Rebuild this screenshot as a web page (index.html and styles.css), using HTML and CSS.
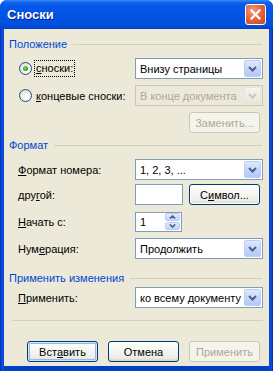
FILE: index.html
```html
<!DOCTYPE html>
<html lang="ru">
<head>
<meta charset="utf-8">
<title>Сноски</title>
<link rel="stylesheet" href="styles.css">
</head>
<body>
<div class="window">
  <!-- ===== заголовок ===== -->
  <div class="titlebar">
    <span class="title">Сноски</span>
    <span class="close">
      <svg width="11" height="11" viewBox="0 0 11 11"><path d="M1.5 1.5 9.5 9.5M9.5 1.5 1.5 9.5" stroke="#fff" stroke-width="2.2" stroke-linecap="square"/></svg>
    </span>
  </div>

  <div class="client">
    <!-- ===== Положение ===== -->
    <div class="caption"><span>Положение</span></div>
    <div class="row first">
      <label class="radio-label"><span class="radio checked"></span><span class="focus"><u>с</u>носки:</span></label>
      <div class="select"><span class="val">Внизу страницы</span><span class="drop"><svg width="9" height="6" viewBox="0 0 9 6"><path d="M1 1 4.5 4.5 8 1" fill="none" stroke="#4d6185" stroke-width="2"/></svg></span></div>
    </div>
    <div class="row">
      <label class="radio-label"><span class="radio"></span><span class="plain"><u>к</u>онцевые сноски:</span></label>
      <div class="select disabled"><span class="val">В конце документа</span><span class="drop"><svg width="9" height="6" viewBox="0 0 9 6"><path d="M1 1 4.5 4.5 8 1" fill="none" stroke="#c9c7ba" stroke-width="2"/></svg></span></div>
    </div>
    <div class="row right">
      <span class="btn disabled">Заменить...</span>
    </div>

    <!-- ===== Формат ===== -->
    <div class="caption fmt"><span>Формат</span></div>
    <div class="row first">
      <span class="lbl"><u>Ф</u>ормат номера:</span>
      <div class="select"><span class="val">1, 2, 3, ...</span><span class="drop"><svg width="9" height="6" viewBox="0 0 9 6"><path d="M1 1 4.5 4.5 8 1" fill="none" stroke="#4d6185" stroke-width="2"/></svg></span></div>
    </div>
    <div class="row tight">
      <span class="lbl">дру<u>г</u>ой:</span>
      <div class="pair">
        <span class="input"></span>
        <span class="btn dark">С<u>и</u>мвол...</span>
      </div>
    </div>
    <div class="row">
      <span class="lbl"><u>Н</u>ачать с:</span>
      <div class="spin">
        <span class="val">1</span>
        <span class="arrows">
          <span class="half"><svg width="7" height="4" viewBox="0 0 7 4"><path d="M.8 3.5 3.5 1 6.2 3.5" fill="none" stroke="#4d6185" stroke-width="1.6"/></svg></span>
          <span class="half"><svg width="7" height="4" viewBox="0 0 7 4"><path d="M.8 .5 3.5 3 6.2 .5" fill="none" stroke="#4d6185" stroke-width="1.6"/></svg></span>
        </span>
      </div>
    </div>
    <div class="row">
      <span class="lbl">Нум<u>е</u>рация:</span>
      <div class="select"><span class="val">Продолжить</span><span class="drop"><svg width="9" height="6" viewBox="0 0 9 6"><path d="M1 1 4.5 4.5 8 1" fill="none" stroke="#4d6185" stroke-width="2"/></svg></span></div>
    </div>

    <!-- ===== Применить изменения ===== -->
    <div class="caption apply"><span>Применить изменения</span></div>
    <div class="row near">
      <span class="lbl"><u>П</u>рименить:</span>
      <div class="select"><span class="val">ко всему документу</span><span class="drop"><svg width="9" height="6" viewBox="0 0 9 6"><path d="M1 1 4.5 4.5 8 1" fill="none" stroke="#4d6185" stroke-width="2"/></svg></span></div>
    </div>

    <div class="sep"></div>

    <!-- ===== кнопки ===== -->
    <div class="buttons">
      <span class="btn default">Вст<u>а</u>вить</span>
      <span class="btn">Отмена</span>
      <span class="btn disabled">Применить</span>
    </div>
  </div>
</div>
</body>
</html>
```

FILE: styles.css
```css
/* ==== общие ==== */
*,*::before,*::after{box-sizing:border-box;margin:0;padding:0}
html,body{width:100%;height:100%;background:#fff}
body{font-family:"Liberation Sans",Arial,sans-serif;font-size:11px;color:#000}
u{text-decoration:underline;text-underline-offset:1px}

/* ==== окно ==== */
.window{
  width:273px;height:371px;
  display:flex;flex-direction:column;
  background:linear-gradient(90deg,#0019a8 0,#0843d0 1px,#0a4fe0 2px,#0a4fe0 3px,#0040c8 4px,#0040c8 269px,#0a4fe0 270px,#0843d0 272px,#0019a8 273px);
  border-radius:7px 7px 0 0;
  overflow:hidden;
}
.titlebar{
  height:29px;flex:none;
  display:flex;align-items:center;justify-content:space-between;
  padding:0 7px 0 7px;
  background:linear-gradient(#3c8cf6 0,#1468ef 2px,#0858e8 5px,#0055e6 14px,#0052e0 22px,#004bd6 27px,#0040c4 29px);
}
.title{
  color:#fff;font-weight:bold;font-size:13px;
  text-shadow:1px 1px 0 #0a1e8c;
  padding-bottom:1px;
}
.close{
  width:21px;height:21px;
  display:flex;align-items:center;justify-content:center;
  border:1px solid #fff;border-radius:3px;
  background:radial-gradient(circle at 35% 30%,#f3a088 0,#e5663f 45%,#c9441f 100%);
  margin-bottom:1px;
}

.client{
  flex:1;
  margin:0 4px 5px 4px;
  background:#ece9d8;
  padding:8px 6px 0 5px;
  display:flex;flex-direction:column;
}

/* ==== групповые заголовки ==== */
.caption{
  height:14px;display:flex;align-items:center;gap:6px;
  color:#0046d5;line-height:14px;
  margin-right:1px;
}
.caption::after{content:"";flex:1;height:1px;background:#d0d0bf;margin-top:1px}
.caption.fmt{margin-top:5px}
.caption.apply{margin-top:12px}

/* ==== строки ==== */
.row{
  display:grid;grid-template-columns:126px 128px;
  align-items:center;height:21px;margin-top:6px;
}
.row.first{margin-top:7px}
.row.tight{margin-top:4px}
.row.near{margin-top:2px}
.row.right{display:flex;justify-content:flex-end;padding-right:3px}
.lbl{padding-left:9px}

.radio-label{display:flex;align-items:center;padding-left:10px;gap:3px}
.radio{
  width:13px;height:13px;border-radius:50%;
  border:1px solid #1c5180;
  background:radial-gradient(circle at 65% 70%,#fff 0,#f4f3ee 35%,#dcd9cf 100%);
  display:flex;align-items:center;justify-content:center;
}
.radio.checked::after{
  content:"";width:5px;height:5px;border-radius:50%;
  background:radial-gradient(circle at 40% 40%,#6ddc6d 0,#21a121 70%);
}
.focus{outline:1px dotted #000;outline-offset:0;padding:1px 1px 2px 1px}
.plain{padding:1px}

/* ==== выпадающие списки ==== */
.select{
  height:21px;display:flex;align-items:center;justify-content:space-between;
  border:1px solid #7f9db9;background:#fff;
  padding:1px 1px 1px 4px;
}
.select .val{white-space:nowrap;overflow:hidden}
.drop{
  width:17px;height:17px;flex:none;
  display:flex;align-items:center;justify-content:center;
  border:1px solid #bccdf5;border-radius:2px;
  background:linear-gradient(#dfe8fd,#c2d4fb 60%,#b4c8f6);
}
.select.disabled{border-color:#c9c7ba;background:#ece9d8;color:#aca899}
.select.disabled .drop{border-color:#e8e6dc;background:linear-gradient(#f4f3ee,#e8e6dd)}

/* ==== поля ==== */
.pair{display:flex;align-items:center;gap:6px}
.input{width:48px;height:21px;border:1px solid #7f9db9;background:#fff}
.spin{
  width:47px;height:20px;display:flex;align-items:center;justify-content:space-between;
  border:1px solid #7f9db9;background:#fff;padding:1px 1px 1px 4px;
}
.arrows{display:flex;flex-direction:column;gap:1px;height:17px}
.half{
  width:15px;height:8px;
  display:flex;align-items:center;justify-content:center;
  border:1px solid #bccdf5;border-radius:2px;
  background:linear-gradient(#dfe8fd,#c2d4fb);
}

/* ==== кнопки ==== */
.btn{
  width:71px;height:21px;flex:none;
  display:flex;align-items:center;justify-content:center;
  border:1px solid #003c74;border-radius:3px;
  background:linear-gradient(#fff 0,#f7f7f4 40%,#ecebe6 85%,#d6d0c5 100%);
  white-space:nowrap;
}
.btn.dark{box-shadow:inset 0 0 0 1px #fff}
.btn.default{box-shadow:inset 0 0 0 1px #cee7ff,inset 0 0 0 2px #98b8ea}
.btn.disabled{border-color:#c9c7ba;background:#f5f4ea;color:#aca899}

.sep{height:1px;background:#d0d0bf;margin:12px 0 0 3px}
.buttons{display:flex;justify-content:flex-end;gap:10px;padding-right:3px;margin-top:20px}
```
